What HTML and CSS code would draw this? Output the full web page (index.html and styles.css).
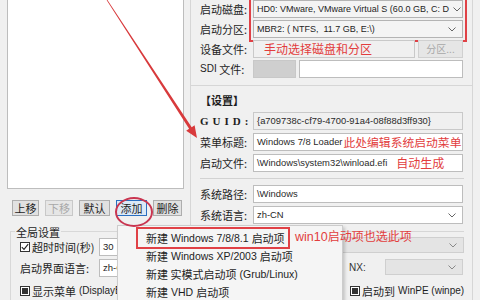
FILE: index.html
```html
<!DOCTYPE html>
<html lang="zh-CN">
<head>
<meta charset="utf-8">
<link rel="stylesheet" href="styles.css">
</head>
<body>
<div class="app">
  <div class="left">
    <div class="listbox"></div>
    <div class="btnrow">
      <div class="btn w27">上移</div>
      <div class="btn w28 disabled">下移</div>
      <div class="btn w31">默认</div>
      <div class="btn w31 focus">添加</div>
      <div class="btn w29">删除</div>
    </div>
    <div class="group">
      <div class="group-title">全局设置</div>
      <div class="grow">
        <span class="lbl"><span class="chk"><svg width="8" height="8" viewBox="0 0 8 8"><path d="M0.8 4.2 L3 6.4 L7.2 1.2" stroke="#222" stroke-width="1.1" fill="none"/></svg></span>超时时间(秒)</span>
        <span class="inp">30</span>
      </div>
      <div class="grow">
        <span class="lbl">启动界面语言:</span>
        <span class="inp">zh-CN</span>
      </div>
      <div class="grow">
        <span class="lbl wide"><span class="chk"><span class="fill"></span></span>显示菜单 <span class="lat">(DisplayBc</span></span>
      </div>
    </div>
  </div>

  <div class="right">
    <div class="sec-top">
      <div class="form">
        <div class="label">启动磁盘:</div>
        <div class="hl">
          <div class="combo"><span class="lat">HD0: VMware, VMware Virtual S (60.0 GB, C: D</span><svg class="chev" width="8" height="5" viewBox="0 0 8 5"><path d="M0.5 0.5 L4 4 L7.5 0.5" stroke="#666" fill="none"/></svg></div>
          <div class="combo"><span class="lat">MBR2: ( NTFS,&nbsp; 11.7 GB, E:\)</span><svg class="chev" width="8" height="5" viewBox="0 0 8 5"><path d="M0.5 0.5 L4 4 L7.5 0.5" stroke="#666" fill="none"/></svg></div>
        </div>
        <div class="label">启动分区:</div>
        <div class="label">设备文件:</div>
        <div class="pair">
          <div class="field grayf w162"><span class="red note1">手动选择磁盘和分区</span></div>
          <div class="btn dis-btn">分区...</div>
        </div>
        <div class="label"><span class="lat">SDI</span>&nbsp;文件:</div>
        <div class="pair">
          <div class="sdibox"></div>
          <div class="field whitef grow1"></div>
        </div>
      </div>
    </div>

    <div class="sec-set">
      <div class="sec-title">【设置】</div>
      <div class="form f2">
        <div class="label guid">GUID:</div>
        <div class="field grayf"><span class="lat">{a709738c-cf79-4700-91a4-08f88d3ff930}</span></div>
        <div class="label">菜单标题:</div>
        <div class="field whitef"><span class="lat">Windows 7/8 Loader</span><span class="red note2">此处编辑系统启动菜单</span></div>
        <div class="label">启动文件:</div>
        <div class="field whitef"><span class="lat">\Windows\system32\winload.efi</span><span class="red note3">自动生成</span></div>
      </div>
      <div class="sep"></div>
      <div class="form f3">
        <div class="label">系统路径:</div>
        <div class="field whitef"><span class="lat">\Windows</span></div>
        <div class="label">系统语言:</div>
        <div class="combo whitec"><span class="lat">zh-CN</span><svg class="chev" width="8" height="5" viewBox="0 0 8 5"><path d="M0.5 0.5 L4 4 L7.5 0.5" stroke="#666" fill="none"/></svg></div>
      </div>
      <div class="subgroup">
        <div class="sg-row1">
          <div class="combo disc"><svg class="chev" width="8" height="5" viewBox="0 0 8 5"><path d="M0.5 0.5 L4 4 L7.5 0.5" stroke="#888" fill="none"/></svg></div>
        </div>
        <div class="sg-row2">
          <span class="nx lat">NX:</span>
          <div class="combo disc nxc"><svg class="chev" width="8" height="5" viewBox="0 0 8 5"><path d="M0.5 0.5 L4 4 L7.5 0.5" stroke="#888" fill="none"/></svg></div>
        </div>
        <div class="sg-row3">
          <span class="chk"><span class="fill"></span></span>启动到 <span class="lat">WinPE (winpe)</span>
        </div>
      </div>
    </div>
  </div>

  <div class="menu">
    <div class="mi"><span class="mi-hl">新建 <span class="lat">Windows 7/8/8.1</span> 启动项</span></div>
    <div class="mi">新建 <span class="lat">Windows XP/2003</span> 启动项</div>
    <div class="mi">新建 实模式启动项 <span class="lat">(Grub/Linux)</span></div>
    <div class="mi">新建 <span class="lat">VHD</span> 启动项</div>
  </div>

  <div class="note-win10"><span class="lat">win10</span>启动项也选此项</div>
  <div class="ellipse"></div>
  <svg class="arrow" width="480" height="300" viewBox="0 0 480 300">
    <polygon points="107.3,-0.2 191.7,127.2 194.6,125.3 197,138 186.2,130.7 189.1,128.8 106.7,0.2" fill="#d83a3c"/>
  </svg>
</div>
</body>
</html>
```
FILE: styles.css
```css
* { box-sizing: border-box; }
body {
  margin: 0;
  font-family: "Noto Sans CJK SC", "Noto Sans", sans-serif;
  font-size: 11px;
  color: #1e1e1e;
  background: #f0f0f0;
}
.lat { font-family: "Liberation Sans", "Noto Sans CJK SC", sans-serif; }
.app {
  position: relative;
  width: 480px;
  height: 300px;
  overflow: hidden;
  display: flex;
  background: #f0f0f0;
}

/* left column */
.left {
  width: 190px;
  flex: none;
  display: flex;
  flex-direction: column;
  padding-left: 7px;
}
.listbox {
  width: 177px;
  height: 196px;
  margin-top: -1px;
  background: #fff;
  border: 1px solid #bdbdbd;
}
.btnrow {
  display: flex;
  gap: 6px;
  margin-top: 11px;
  padding-left: 5px;
}
.btn {
  height: 16px;
  border: 1px solid #adadad;
  background: #e1e1e1;
  display: flex;
  align-items: center;
  justify-content: center;
  font-size: 11px;
  line-height: 14px;
  color: #1e1e1e;
}
.w27 { width: 27px; }
.w28 { width: 28px; }
.w29 { width: 29px; }
.w31 { width: 31px; }
.btn.disabled { color: #a8a8a8; border-color: #c8c8c8; background: #e6e6e6; }
.btn.focus { border-color: #2a6fc0; background: #dbe9f7; }

.group {
  margin-top: 15px;
  margin-left: 3px;
  border-top: 1px solid #d8d8d8;
  border-left: 1px solid #d8d8d8;
  display: flex;
  flex-direction: column;
  gap: 3px;
}
.group-title {
  margin-top: -8px;
  margin-left: 4px;
  align-self: flex-start;
  background: #f0f0f0;
  line-height: 16px;
  padding: 0 1px;
}
.grow {
  height: 18px;
  display: flex;
  align-items: center;
  padding-left: 9px;
}
.group-title + .grow { margin-top: -5px; }
.grow:last-child { margin-top: 2px; }
.lbl {
  width: 79px;
  flex: none;
  display: flex;
  align-items: center;
  white-space: nowrap;
  line-height: 14px;
}
.lbl.wide { width: auto; }
.lbl .lat { font-size: 10px; margin-left: 3px; }
.chk {
  width: 10px;
  height: 10px;
  border: 1px solid #333;
  background: #fff;
  margin-right: 2px;
  display: inline-flex;
  align-items: center;
  justify-content: center;
  flex: none;
}
.chk .fill { width: 6px; height: 6px; background: #333; }
.inp {
  width: 40px;
  height: 18px;
  background: #fff;
  border: 1px solid #bdbdbd;
  padding-left: 3px;
  font-family: "Liberation Sans", sans-serif;
  font-size: 9.5px;
  line-height: 16px;
}

/* right column */
.right {
  width: 283px;
  flex: none;
  display: flex;
  flex-direction: column;
}
.sec-top {
  height: 86px;
  border: 1px solid #d6d6d6;
  border-top: none;
  padding: 0 8px 0 9px;
}
.form {
  display: grid;
  grid-template-columns: 53px 210px;
  grid-auto-rows: 18px;
  row-gap: 2px;
}
.label {
  display: flex;
  align-items: center;
  white-space: nowrap;
  line-height: 14px;
}
.label .lat { font-size: 10px; }
.hl {
  grid-column: 2;
  grid-row: 1 / span 2;
  display: flex;
  flex-direction: column;
  gap: 2px;
  outline: 2px solid #e04146;
  outline-offset: 2px;
}
.form .label:nth-of-type(2) { grid-row: 2; grid-column: 1; }
.combo {
  height: 18px;
  border: 1px solid #b4b4b4;
  background: #f4f4f4;
  display: flex;
  align-items: center;
  justify-content: space-between;
  padding: 0 6px 0 3px;
  font-size: 9px;
  line-height: 14px;
  white-space: nowrap;
  overflow: hidden;
  color: #1e1e1e;
}
.chev { flex: none; margin-left: 4px; }
.pair { display: flex; gap: 3px; }
.field {
  height: 18px;
  border: 1px solid #bdbdbd;
  display: flex;
  align-items: center;
  padding-left: 3px;
  font-size: 9.4px;
  line-height: 14px;
  white-space: nowrap;
  overflow: hidden;
  color: #2a2a2a;
}
.grayf { background: #f0f0f0; border-color: #c9c9c9; }
.whitef { background: #fff; }
.w162 { width: 162px; flex: none; }
.grow1 { flex: 1; }
.dis-btn { width: 45px; height: 18px; color: #a8a8a8; border-color: #d0d0d0; background: #e6e6e6; font-size: 10px; }
.sdibox { width: 43px; flex: none; height: 18px; background: #cfcfcf; border: 1px solid #c8c8c8; }
.red { color: #e23d3d; font-size: 12px; line-height: 14px; }
.note1 { margin-left: 7px; }
.note2 { margin-left: 1px; font-size: 11.8px; }
.note3 { margin-left: 9px; }

.sec-set {
  flex: 1;
  border-left: 1px solid #d6d6d6;
  border-right: 1px solid #d6d6d6;
  padding: 7px 8px 0 9px;
}
.sec-title {
  font-weight: bold;
  line-height: 14px;
}
.f2 { margin-top: 5px; row-gap: 3px; }
.f3 { row-gap: 3px; }
.guid {
  font-family: "Liberation Serif", serif;
  font-weight: bold;
  letter-spacing: 4px;
  font-size: 11px;
}
.sep {
  height: 1px;
  background: #d2d2d2;
  margin: 6px 0 6px 0;
}
.combo.whitec { background: #fff; border-color: #bdbdbd; font-size: 9.4px; }
.subgroup {
  margin-top: 7px;
  border-top: 1px solid #d6d6d6;
  padding-top: 5px;
  width: 264px;
}
.sg-row1 { padding-left: 53px; }
.combo.disc { background: #e4e4e4; border-color: #cfcfcf; justify-content: flex-end; height: 16px; }
.sg-row2 {
  margin-top: 6px;
  padding-left: 149px;
  display: flex;
  align-items: center;
}
.nx { width: 36px; font-size: 10px; color: #333; }
.nxc { width: 78px; height: 18px; }
.sg-row3 {
  margin-top: 9px;
  padding-left: 150px;
  display: flex;
  align-items: center;
  line-height: 14px;
  white-space: nowrap;
}
.sg-row3 .lat { font-size: 10px; margin-left: 3px; }

/* popup menu */
.menu {
  position: absolute;
  left: 117px;
  top: 225px;
  width: 226px;
  height: 80px;
  background: #f5f5f5;
  border: 1px solid #cccccc;
  box-shadow: 2px 2px 3px rgba(0,0,0,0.18);
  padding-top: 3px;
}
.mi {
  height: 18px;
  display: flex;
  align-items: center;
  padding-left: 28px;
  white-space: nowrap;
  line-height: 14px;
  color: #1e1e1e;
}
.mi .lat { margin: 0 3px; font-size: 10.5px; }
.mi-hl {
  display: inline-flex;
  align-items: center;
  padding: 2px 3px 2px 8px;
  margin-left: -8px;
  outline: 2px solid #e04146;
}
.note-win10 {
  position: absolute;
  left: 295px;
  top: 228px;
  color: #e23d3d;
  font-size: 12px;
  line-height: 16px;
  white-space: nowrap;
}
.note-win10 .lat { font-size: 12.5px; }
.ellipse {
  position: absolute;
  left: 115px;
  top: 197px;
  width: 38px;
  height: 30px;
  border: 2px solid #c93550;
  border-radius: 50%;
}
.arrow {
  position: absolute;
  left: 0;
  top: 0;
  pointer-events: none;
}
```
